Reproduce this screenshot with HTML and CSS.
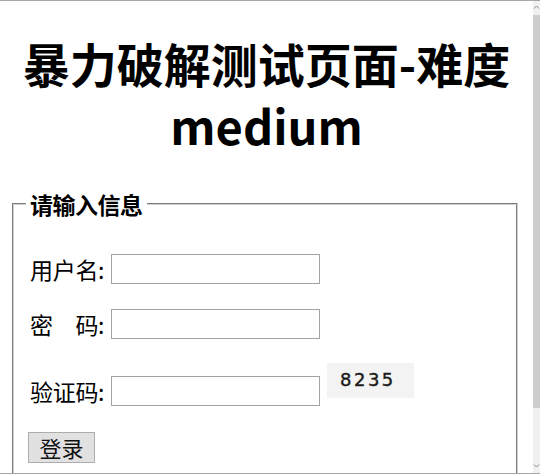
FILE: index.html
```html
<!DOCTYPE html>
<html lang="zh">
<head>
<meta charset="utf-8">
<title>暴力破解测试页面-难度medium</title>
<link rel="stylesheet" href="styles.css">
</head>
<body>
<div class="frame">
  <main class="page">
    <h1 class="title">暴力破解测试页面-难度<br>medium</h1>
    <form class="login">
      <fieldset class="box">
        <legend class="legend">请输入信息</legend>
        <div class="row">
          <label class="label">用户名:</label>
          <input class="field" type="text">
        </div>
        <div class="row">
          <label class="label">密　码:</label>
          <input class="field" type="password">
        </div>
        <div class="row row-captcha">
          <label class="label">验证码:</label>
          <input class="field" type="text">
          <span class="captcha">8235</span>
        </div>
        <div class="row">
          <button class="submit" type="button">登录</button>
        </div>
      </fieldset>
    </form>
  </main>
  <div class="scrollbar">
    <svg class="arrow" width="7" height="6" viewBox="0 0 7 6"><path d="M1 4.5 L3.5 2 L6 4.5" fill="none" stroke="#8a8a8a" stroke-width="1"/></svg>
    <div class="thumb"></div>
    <svg class="arrow arrow-down" width="7" height="6" viewBox="0 0 7 6"><path d="M1 1.5 L3.5 4 L6 1.5" fill="none" stroke="#8a8a8a" stroke-width="1"/></svg>
  </div>
</div>
</body>
</html>
```
FILE: styles.css
```css
html, body {
  margin: 0;
  padding: 0;
  background: #ffffff;
}
.frame {
  display: flex;
  width: 540px;
  height: 474px;
  box-sizing: border-box;
  border-top: 1px solid #a6a6a6;
  border-bottom: 1px solid #a6a6a6;
  overflow: hidden;
  font-family: "Noto Sans CJK SC", "Noto Sans", sans-serif;
  color: #000;
}
.page {
  flex: 1;
  min-width: 0;
  overflow: hidden;
}
.title {
  margin: 31px 0 0;
  font-size: 47px;
  line-height: 62px;
  font-weight: 700;
  text-align: center;
}
.login {
  margin: 0;
}
.box {
  margin: 34px 15px 0 12px;
  padding: 36px 0 0 16px;
  border: 2px groove #d0d0d0;
  border-bottom: none;
  min-width: 0;
  height: 300px;
}
.legend {
  font-size: 23px;
  font-weight: 700;
  line-height: 28px;
  padding: 0 4px;
  margin-left: -4px;
  letter-spacing: -0.5px;
}
.row {
  display: flex;
  align-items: center;
  margin-top: 25px;
}
.row:first-of-type {
  margin-top: 0;
}
.row-captcha {
  align-items: flex-end;
  min-height: 43px;
  margin-top: 24px;
}
.label {
  font-size: 23px;
  line-height: 30px;
  width: 81px;
  white-space: nowrap;
  letter-spacing: -0.3px;
}
.field {
  width: 209px;
  height: 30px;
  box-sizing: border-box;
  margin: 0;
  padding: 0 3px;
  border: 1px solid #a3a3a3;
  background: #fff;
}
.captcha {
  align-self: flex-start;
  margin-left: 7px;
  width: 87px;
  height: 35px;
  box-sizing: border-box;
  padding: 6px 0 0 13px;
  background: #f3f3f3;
  font-family: "DejaVu Sans", "Liberation Sans", sans-serif;
  font-size: 18px;
  line-height: 22px;
  letter-spacing: 2.5px;
  -webkit-text-stroke: 0.4px #1a1a1a;
  color: #1a1a1a;
}
.submit {
  margin: 1px 0 0 -2px;
  width: 67px;
  height: 31px;
  padding: 0;
  border: 1px solid #adadad;
  background: #e1e1e1;
  font-family: "Noto Sans CJK SC", sans-serif;
  font-size: 22px;
  line-height: 29px;
  color: #111;
}
.scrollbar {
  width: 7px;
  display: flex;
  flex-direction: column;
  align-items: center;
  background: #f0f0f0;
}
.arrow {
  flex: none;
  margin-top: 3px;
}
.thumb {
  width: 100%;
  height: 393px;
  margin-top: 5px;
  background: #cdcdcd;
}
.arrow-down {
  margin-top: auto;
  margin-bottom: 4px;
}
```
